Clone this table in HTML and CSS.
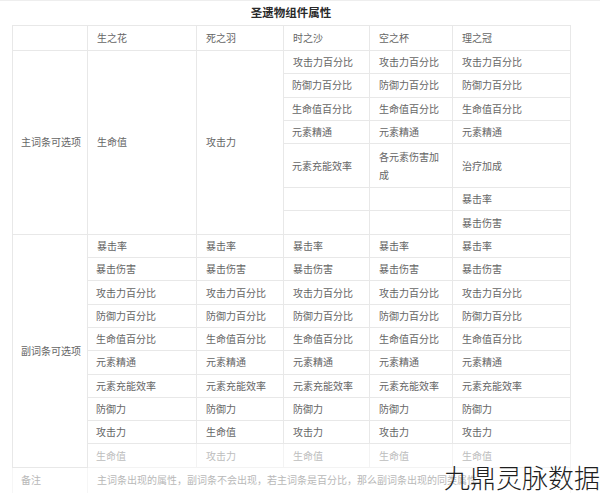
FILE: index.html
```html
<!DOCTYPE html>
<html lang="zh-CN">
<head>
<meta charset="utf-8">
<link rel="stylesheet" href="styles.css">
</head>
<body>
<div class="page">
  <div class="title">圣遗物组件属性</div>
  <table class="grid">
    <colgroup>
      <col class="c-label"><col class="c-flower"><col class="c-plume"><col class="c-sands"><col class="c-goblet"><col class="c-circlet">
    </colgroup>
    <tr class="head">
      <td></td><td>生之花</td><td>死之羽</td><td>时之沙</td><td>空之杯</td><td>理之冠</td>
    </tr>
    <tr>
      <td rowspan="7">主词条可选项</td>
      <td rowspan="7">生命值</td>
      <td rowspan="7">攻击力</td>
      <td>攻击力百分比</td><td>攻击力百分比</td><td>攻击力百分比</td>
    </tr>
    <tr><td>防御力百分比</td><td>防御力百分比</td><td>防御力百分比</td></tr>
    <tr><td>生命值百分比</td><td>生命值百分比</td><td>生命值百分比</td></tr>
    <tr><td>元素精通</td><td>元素精通</td><td>元素精通</td></tr>
    <tr class="tall"><td>元素充能效率</td><td>各元素伤害加成</td><td>治疗加成</td></tr>
    <tr><td></td><td></td><td>暴击率</td></tr>
    <tr><td></td><td></td><td>暴击伤害</td></tr>

    <tr>
      <td rowspan="10">副词条可选项</td>
      <td>暴击率</td><td>暴击率</td><td>暴击率</td><td>暴击率</td><td>暴击率</td>
    </tr>
    <tr><td>暴击伤害</td><td>暴击伤害</td><td>暴击伤害</td><td>暴击伤害</td><td>暴击伤害</td></tr>
    <tr><td>攻击力百分比</td><td>攻击力百分比</td><td>攻击力百分比</td><td>攻击力百分比</td><td>攻击力百分比</td></tr>
    <tr><td>防御力百分比</td><td>防御力百分比</td><td>防御力百分比</td><td>防御力百分比</td><td>防御力百分比</td></tr>
    <tr><td>生命值百分比</td><td>生命值百分比</td><td>生命值百分比</td><td>生命值百分比</td><td>生命值百分比</td></tr>
    <tr><td>元素精通</td><td>元素精通</td><td>元素精通</td><td>元素精通</td><td>元素精通</td></tr>
    <tr><td>元素充能效率</td><td>元素充能效率</td><td>元素充能效率</td><td>元素充能效率</td><td>元素充能效率</td></tr>
    <tr><td>防御力</td><td>防御力</td><td>防御力</td><td>防御力</td><td>防御力</td></tr>
    <tr><td>攻击力</td><td>生命值</td><td>攻击力</td><td>攻击力</td><td>攻击力</td></tr>
    <tr class="faded"><td>生命值</td><td>攻击力</td><td>生命值</td><td>生命值</td><td>生命值</td></tr>
    <tr class="note">
      <td>备注</td>
      <td colspan="5"><div class="note-text">主词条出现的属性，副词条不会出现，若主词条是百分比，那么副词条出现的同类属性</div></td>
    </tr>
  </table>
  <div class="watermark">九鼎灵脉数据</div>
</div>
</body>
</html>
```

FILE: styles.css
```css
html, body {
  margin: 0;
  padding: 0;
  background: #ffffff;
}

body {
  font-family: "Noto Sans CJK SC", "Noto Sans", sans-serif;
  color: #666666;
  border-top: 1px solid #eeeeee;
}

.page {
  position: relative;
  width: 600px;
  height: 492px;
  padding-left: 12px;
  box-sizing: border-box;
  overflow: hidden;
}

.title {
  width: 558px;
  height: 24px;
  line-height: 23px;
  text-align: center;
  font-size: 11.5px;
  font-weight: bold;
  color: #2a2a2a;
}

.grid {
  border-collapse: collapse;
  table-layout: fixed;
  width: 558px;
  font-size: 10px;
  line-height: 18px;
}

.c-label { width: 75px; }
.c-flower { width: 109px; }
.c-plume { width: 87px; }
.c-sands { width: 86px; }
.c-goblet { width: 83px; }
.c-circlet { width: 118px; }

.grid td {
  border: 1px solid #e8e8e8;
  padding: 0 9px;
  height: 23.3px;
  box-sizing: border-box;
  vertical-align: middle;
  white-space: normal;
}

.grid tr.head td {
  height: 25px;
}

.grid tr.tall td {
  height: 44px;
}

.grid td:first-child {
  padding: 0 2px 0 8px;
  white-space: nowrap;
}

.grid tr.faded td {
  color: #bdbdbd;
  border-color: #f3f3f3;
}

.grid tr.note td {
  height: 26px;
  color: #b8b8b8;
  border-color: #f6f6f6;
}

.note-text {
  white-space: nowrap;
}

.watermark {
  position: absolute;
  right: 0;
  top: 461px;
  font-size: 26px;
  line-height: 30px;
  color: #1f1f1f;
  font-weight: 300;
  white-space: nowrap;
}
```
